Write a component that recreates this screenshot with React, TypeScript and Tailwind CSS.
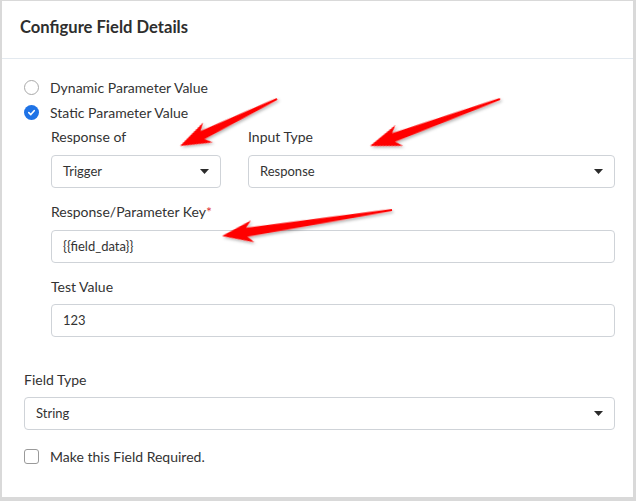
import React from "react";

const Caret = () => (
  <svg width="9" height="5" viewBox="0 0 9 5" className="shrink-0">
    <path d="M0 0 L9 0 L4.5 5 Z" fill="#2b2b2b" />
  </svg>
);

const Select = ({ value, className = "" }: { value: string; className?: string }) => (
  <div
    className={`h-[33px] border border-[#cfd3d8] rounded-[4px] bg-white flex items-center justify-between pl-[11px] pr-[11px] ${className}`}
  >
    <span className="text-[13px] text-[#333] font-['Lato',sans-serif]">{value}</span>
    <Caret />
  </div>
);

const Input = ({ value, className = "" }: { value: string; className?: string }) => (
  <div
    className={`h-[33px] border border-[#cfd3d8] rounded-[4px] bg-white flex items-center pl-[11px] ${className}`}
  >
    <span className="text-[13px] text-[#333] font-['Lato',sans-serif]">{value}</span>
  </div>
);

const Label = ({ children, className = "" }: { children: React.ReactNode; className?: string }) => (
  <div className={`h-5 leading-5 text-[14px] text-[#333] font-['Lato',sans-serif] ${className}`}>{children}</div>
);

function Arrow({ tip, tail }: { tip: [number, number]; tail: [number, number] }) {
  const dx = tail[0] - tip[0];
  const dy = tail[1] - tip[1];
  const L = Math.sqrt(dx * dx + dy * dy);
  const ang = (Math.atan2(dy, dx) * 180) / Math.PI;
  const pts = `0,0 31,-11 25,-4.5 ${L},-1 ${L},1 25,4.5 31,11`;
  return (
    <polygon
      points={pts}
      fill="#ff0000"
      filter="url(#shadow)"
      transform={`translate(${tip[0]} ${tip[1]}) rotate(${ang})`}
    />
  );
}

export default function App() {
  return (
    <div className="relative w-[636px] h-[501px] bg-white overflow-hidden font-['Lato',sans-serif]">
      <div className="w-full h-full border-t border-l-2 border-r-[3px] border-b-[4px] border-[#d9d9d9] flex flex-col">
        <div className="h-[58px] border-b border-[#e3e9ef] flex items-center pl-[18px] pb-[4px]">
          <h1 className="text-[16.6px] font-bold text-[#2e2e2e]">Configure Field Details</h1>
        </div>
        <div className="flex flex-col pl-[22px] pr-[18px] pt-[18px]">
          <div className="flex items-center h-5 gap-[11px]">
            <span className="w-[15px] h-[15px] rounded-full border border-[#a9a9a9] bg-white" />
            <span className="text-[14px] text-[#333]">Dynamic Parameter Value</span>
          </div>
          <div className="flex items-center h-5 gap-[11px] mt-[5px]">
            <span className="w-[15px] h-[15px] rounded-full bg-[#1f73e6] flex items-center justify-center">
              <svg width="9" height="9" viewBox="0 0 10 10">
                <path d="M2 5.2 L4.2 7.3 L8 3" stroke="white" strokeWidth="1.8" fill="none" strokeLinecap="round" strokeLinejoin="round" />
              </svg>
            </span>
            <span className="text-[14px] text-[#333]">Static Parameter Value</span>
          </div>
          <div className="pl-[27px] flex flex-col">
            <div className="flex gap-[27px] mt-[5px]">
              <div className="w-[170px] flex flex-col">
                <Label>Response of</Label>
                <Select value="Trigger" className="mt-[8px]" />
              </div>
              <div className="flex-1 flex flex-col">
                <Label>Input Type</Label>
                <Select value="Response" className="mt-[8px]" />
              </div>
            </div>
            <Label className="mt-[14px]">
              Response/Parameter Key<span className="text-[#e0353b]">*</span>
            </Label>
            <Input value="{{field_data}}" className="mt-[8px]" />
            <Label className="mt-[14px]">Test Value</Label>
            <Input value="123" className="mt-[7px]" />
          </div>
          <Label className="mt-[33px]">Field Type</Label>
          <Select value="String" className="mt-[7px]" />
          <div className="flex items-center h-5 gap-[11px] mt-[16px]">
            <span className="w-[15px] h-[15px] rounded-[3px] border border-[#9a9a9a] bg-white" />
            <span className="text-[14px] text-[#333]">Make this Field Required.</span>
          </div>
        </div>
      </div>
      <svg className="absolute inset-0 pointer-events-none" width="636" height="501">
        <defs>
          <filter id="shadow" x="-20%" y="-50%" width="140%" height="200%">
            <feDropShadow dx="1" dy="2" stdDeviation="1.5" floodColor="#000" floodOpacity="0.3" />
          </filter>
        </defs>
        <Arrow tip={[180, 146]} tail={[277, 99]} />
        <Arrow tip={[370, 146]} tail={[500, 99]} />
        <Arrow tip={[222, 236]} tail={[392, 210]} />
      </svg>
    </div>
  );
}
